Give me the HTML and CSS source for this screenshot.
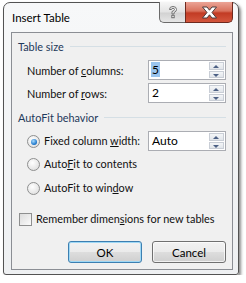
FILE: index.html
```html
<!DOCTYPE html>
<html lang="en">
<head>
    <meta charset="UTF-8">
    <title>Insert Table</title>
    <link rel="stylesheet" href="styles.css">
</head>
<body>
    <div class="window">
        <div class="titlebar">
            <span class="title">Insert Table</span>
            <div class="caption-btns">
                <div class="cap-btn cap-help">
                    <svg width="12" height="14" viewBox="0 0 12 14">
                        <path d="M2.5 4.5 Q2.5 1.5 6 1.5 Q9.5 1.5 9.5 4.5 Q9.5 6.5 7 7.5 L7 9 L5 9 L5 6.5 Q7.5 5.8 7.5 4.5 Q7.5 3.3 6 3.3 Q4.5 3.3 4.5 4.5 Z" fill="#fafafa" stroke="#6e6e6e" stroke-width="1"/>
                        <rect x="4.8" y="10.3" width="2.4" height="2.4" fill="#fafafa" stroke="#6e6e6e" stroke-width="1"/>
                    </svg>
                </div>
                <div class="cap-btn cap-close">
                    <svg width="17" height="13" viewBox="0 0 17 13">
                        <path d="M1.5 1 L6 1 L8.5 4.2 L11 1 L15.5 1 L11 6.5 L15.5 12 L11 12 L8.5 8.8 L6 12 L1.5 12 L6 6.5 Z" fill="#ffffff" stroke="#4b3a3a" stroke-width="1" stroke-linejoin="round"/>
                    </svg>
                </div>
            </div>
        </div>

        <div class="panel">
            <div class="group-head"><span>Table size</span><span class="rule"></span></div>

            <div class="field-row">
                <label>Number of <u>c</u>olumns:</label>
                <div class="spin-box">
                    <span class="value"><span class="sel">5</span></span>
                    <div class="spinner">
                        <span class="spin-up"></span>
                        <span class="spin-down"></span>
                    </div>
                </div>
            </div>
            <div class="field-row row-gap">
                <label>Number of <u>r</u>ows:</label>
                <div class="spin-box">
                    <span class="value">2</span>
                    <div class="spinner">
                        <span class="spin-up"></span>
                        <span class="spin-down"></span>
                    </div>
                </div>
            </div>

            <div class="group-head head-two"><span>AutoFit behavior</span><span class="rule"></span></div>

            <div class="field-row radio-first">
                <label class="opt"><span class="radio checked"></span>Fixed column <u>w</u>idth:</label>
                <div class="spin-box">
                    <span class="value">Auto</span>
                    <div class="spinner">
                        <span class="spin-up"></span>
                        <span class="spin-down"></span>
                    </div>
                </div>
            </div>
            <div class="opt-row radio-second">
                <label class="opt"><span class="radio"></span>Auto<u>F</u>it to contents</label>
            </div>
            <div class="opt-row radio-third">
                <label class="opt"><span class="radio"></span>AutoFit to win<u>d</u>ow</label>
            </div>

            <div class="opt-row check-row">
                <label class="opt"><span class="checkbox"></span>Remember dimen<u>s</u>ions for new tables</label>
            </div>

            <div class="buttons">
                <button class="btn btn-default">OK</button>
                <button class="btn">Cancel</button>
            </div>
        </div>
    </div>
</body>
</html>
```

FILE: styles.css
```css
body {
    margin: 0;
    background: #ffffff;
    font-family: Lato, "Noto Sans", sans-serif;
    font-size: 10.9px;
    color: #111;
}
.window {
    margin: 2px 0 0 3px;
    width: 236px;
    height: 273px;
    background: linear-gradient(#f7f8f9, #eef0f2);
    border: 1px solid #535353;
    border-radius: 7px 7px 3px 3px;
    box-shadow: 2px 2px 3px rgba(0,0,0,0.45);
    box-sizing: border-box;
    padding: 0 5px 6px 7px;
}
.titlebar {
    display: flex;
    justify-content: space-between;
    align-items: flex-start;
    height: 29px;
}
.title {
    margin: 8px 0 0 1px;
    color: #000;
    line-height: 14px;
    font-size: 11.5px;
}
.caption-btns {
    display: flex;
    margin-top: -1px;
}
.cap-btn {
    height: 20px;
    border: 1px solid #6b6b6b;
    border-top: none;
    box-sizing: content-box;
    display: flex;
    align-items: center;
    justify-content: center;
}
.cap-help {
    width: 25px;
    border-radius: 0 0 0 5px;
    border-right: none;
    background: linear-gradient(#f6f6f6 0%, #e3e3e3 50%, #d2d2d2 55%, #e6e6e6 100%);
}
.cap-close {
    width: 46px;
    border-color: #6e2a1f;
    border-radius: 0 0 5px 0;
    background: linear-gradient(#eba496 0%, #d9735e 45%, #c23b24 55%, #d4563d 100%);
}
.panel {
    background: #f0f0f0;
    border: 1px solid #8b8e94;
    height: 238px;
    box-sizing: border-box;
    padding: 5px 6px 0 6px;
}
.group-head {
    display: flex;
    align-items: center;
    height: 16px;
    color: #1e395b;
}
.group-head .rule {
    flex: 1;
    height: 1px;
    background: #d5dfe5;
    margin-left: 6px;
}
.head-two {
    margin-top: 6px;
}
.field-row {
    display: flex;
    align-items: center;
    justify-content: space-between;
    height: 20px;
    margin-top: 6px;
    padding-left: 9px;
}
.row-gap {
    margin-top: 3px;
}
.spin-box {
    display: flex;
    width: 78px;
    height: 20px;
    box-sizing: border-box;
    border: 1px solid #abadb3;
    background: #fff;
    padding: 1px 1px 1px 3px;
    font-size: 12px;
}
.spin-box .value {
    flex: 1;
    line-height: 16px;
    color: #000;
}
.sel {
    background: #99c4ee;
    padding: 0 1px;
    margin-left: -1px;
}
.spinner {
    width: 15px;
    display: flex;
    flex-direction: column;
    gap: 1px;
}
.spin-up, .spin-down {
    flex: 1;
    border: 1px solid #c9ced6;
    background: linear-gradient(#f4f6f8, #e1e5ea);
    position: relative;
}
.spin-up::after, .spin-down::after {
    content: "";
    position: absolute;
    left: 3px;
    top: 2px;
    border-left: 3.5px solid transparent;
    border-right: 3.5px solid transparent;
}
.spin-up::after {
    border-bottom: 3px solid #4d6185;
}
.spin-down::after {
    border-top: 3px solid #4d6185;
}
.opt-row {
    display: flex;
    align-items: center;
    height: 16px;
    padding-left: 9px;
}
.opt {
    white-space: nowrap;
    line-height: 16px;
}
.radio {
    display: inline-block;
    vertical-align: -3px;
    width: 11px;
    height: 11px;
    border-radius: 50%;
    border: 1px solid #8e8f8f;
    background: radial-gradient(circle at 40% 35%, #ffffff, #d8d8d8);
    margin-right: 4px;
    position: relative;
}
.radio.checked::after {
    content: "";
    position: absolute;
    left: 2.5px;
    top: 2.5px;
    width: 6px;
    height: 6px;
    border-radius: 50%;
    background: radial-gradient(circle at 40% 35%, #a8dcff, #1470c7 70%, #0d4d8c);
}
.radio-first {
    margin-top: 6px;
}
.radio-second {
    margin-top: 5px;
}
.radio-third {
    margin-top: 8px;
}
.check-row {
    margin-top: 15px;
    padding-left: 1px;
}
.checkbox {
    display: inline-block;
    vertical-align: -3px;
    width: 11px;
    height: 11px;
    border: 1px solid #8e8f8f;
    background: linear-gradient(135deg, #dcdcdc, #fbfbfb);
    margin-right: 4px;
}
.buttons {
    display: flex;
    justify-content: flex-end;
    gap: 10px;
    margin-top: 14px;
}
.btn {
    width: 74px;
    height: 22px;
    font-family: inherit;
    font-size: 11.5px;
    color: #000;
    border: 1px solid #707070;
    border-radius: 3px;
    background: linear-gradient(#f2f2f2 0%, #ebebeb 48%, #dddddd 52%, #cfcfcf 100%);
    box-shadow: inset 0 0 0 1px rgba(255,255,255,0.7);
    padding: 0;
}
.btn-default {
    border-color: #3c7fb1;
    box-shadow: inset 0 0 0 1px #9fd8f5;
}
```
